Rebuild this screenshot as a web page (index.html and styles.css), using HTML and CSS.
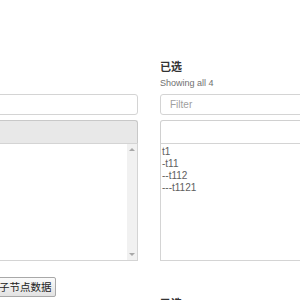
FILE: index.html
```html
<!DOCTYPE html>
<html>
<head>
<meta charset="utf-8">
<link rel="stylesheet" href="styles.css">
</head>
<body>
<div class="page">
  <div class="row">
    <div class="col">
      <div class="title"></div>
      <div class="info"></div>
      <input class="filter" placeholder="">
      <div class="bar bar-active"></div>
      <div class="box">
        <div class="list"></div>
        <div class="scroll">
          <span class="arr up"></span>
          <span class="arr down"></span>
        </div>
      </div>
    </div>
    <div class="col">
      <h4 class="title">已选</h4>
      <div class="info">Showing all 4</div>
      <input class="filter" placeholder="Filter">
      <div class="bar"></div>
      <div class="box">
        <div class="list">
          <div class="opt">t1</div>
          <div class="opt">-t11</div>
          <div class="opt">--t112</div>
          <div class="opt">---t1121</div>
        </div>
      </div>
    </div>
  </div>
  <div class="actions">
    <button class="btn">子节点数据</button>
  </div>
  <div class="row">
    <div class="col"></div>
    <div class="col">
      <h4 class="title">已选</h4>
    </div>
  </div>
</div>
</body>
</html>
```
FILE: styles.css
```css
html, body {
  margin: 0;
  padding: 0;
  background: #fff;
  overflow: hidden;
}
body {
  font-family: "Liberation Sans", "Noto Sans CJK SC", sans-serif;
  color: #333;
}
.page {
  padding-top: 60px;
}
.row {
  display: flex;
  gap: 22px;
  margin-left: -62px;
}
.col {
  flex: none;
  width: 200px;
  display: flex;
  flex-direction: column;
}
.title {
  margin: 0;
  font-size: 11px;
  line-height: 14px;
  height: 14px;
  font-weight: bold;
  color: #333;
}
.info {
  margin-top: 4px;
  height: 11px;
  font-size: 9px;
  line-height: 11px;
  color: #707070;
}
.filter {
  margin: 5px 0 0 0;
  box-sizing: border-box;
  height: 21px;
  width: 100%;
  border: 1px solid #d4d4d4;
  border-radius: 3px;
  padding: 0 0 0 9px;
  font-family: "Liberation Sans", sans-serif;
  font-size: 10px;
  color: #555;
  outline: none;
}
.filter::placeholder {
  color: #a0a0a0;
}
.bar {
  margin-top: 5px;
  box-sizing: border-box;
  height: 23px;
  border: 1px solid #d0d0d0;
  border-bottom: none;
  border-radius: 3px 3px 0 0;
  background: #fff;
}
.bar-active {
  background: #e8e8e8;
  border-color: #c8c8c8;
}
.box {
  box-sizing: border-box;
  height: 118px;
  border: 1px solid #d4d4d4;
  display: flex;
}
.list {
  flex: 1;
  padding: 2px 0 0 1px;
}
.opt {
  font-size: 10px;
  line-height: 12px;
  color: #606060;
}
.scroll {
  width: 10px;
  background: #f1f1f1;
  display: flex;
  flex-direction: column;
  justify-content: space-between;
  align-items: center;
  padding: 4px 0 4px;
}
.arr {
  width: 0;
  height: 0;
  border-left: 3px solid transparent;
  border-right: 3px solid transparent;
}
.arr.up {
  border-bottom: 3px solid #a8a8a8;
}
.arr.down {
  border-top: 3px solid #a8a8a8;
}
.actions {
  margin-top: 16px;
  margin-left: -5px;
  display: flex;
}
.btn {
  box-sizing: border-box;
  height: 20px;
  padding: 0 3px;
  border: 1px solid #a8a8a8;
  border-radius: 2px;
  background: linear-gradient(#fbfbfb, #e2e2e2);
  font-family: "Noto Sans CJK SC", sans-serif;
  font-size: 10.5px;
  line-height: 18px;
  color: #222;
}
```
